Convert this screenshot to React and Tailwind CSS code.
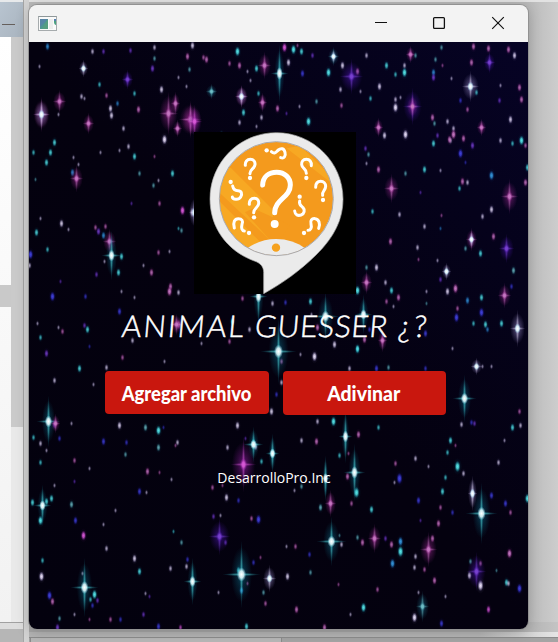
import React from "react";

const COLORS = {
  w: ["#e9e0fa", "#8d80bd"],
  c: ["#56e6e8", "#0b86a4"],
  t: ["#70c0c8", "#155f78"],
  p: ["#c878c4", "#8c2383"],
  m: ["#d95ad8", "#861a98"],
  v: ["#7a42d2", "#4413a0"],
  b: ["#4040dc", "#1c18a0"],
  s: ["#3496dc", "#0b4f9c"],
};

// Small elongated stars: x, y, colour, size
const DOTS = [
  [47,46,"s",3],[92,51,"w",2],[103,51,"v",2],[130,50,"v",2],[154,47,"w",2],[154,58,"t",2],[192,45,"w",3],[187,56,"p",3],[189,69,"t",2],
  [39,66,"w",1],[99,84,"c",2],[106,95,"p",2],[84,98,"w",1],[81,96,"w",2],[117,103,"s",2],[134,93,"c",2],[110,108,"w",3],[111,115,"w",3],[138,109,"p",3],[161,89,"w",3],[152,68,"v",3],[178,77,"w",1],[186,86,"w",1],[123,128,"w",2],[128,146,"w",2],[100,152,"w",1],[119,150,"w",1],[134,156,"c",3],[164,139,"w",4],[154,156,"p",1],
  [54,142,"c",3],[50,152,"c",3],[33,152,"c",2],[46,162,"c",3],[35,179,"t",1],[58,114,"w",1],[73,157,"w",1],[78,164,"w",1],[72,172,"s",3],[139,173,"t",2],[172,173,"c",3],[158,180,"w",1],[153,185,"t",2],[159,203,"p",2],[182,210,"m",4],[192,212,"w",4],[178,228,"c",1],[181,230,"t",2],[131,203,"v",1],
  [203,57,"p",2],[206,59,"p",3],[229,63,"p",2],[239,65,"p",3],[237,51,"c",4],[256,68,"c",3],[247,71,"w",1],[250,80,"w",1],[284,47,"m",4],[293,49,"c",4],[301,51,"c",3],[297,45,"p",1],[288,62,"w",3],[312,55,"v",2],[328,72,"c",4],[342,65,"w",3],[302,73,"b",3],[357,71,"p",3],[340,89,"w",2],[316,101,"t",2],[341,105,"p",2],[299,106,"w",1],[308,121,"c",4],[258,93,"c",2],[243,112,"c",3],[277,108,"p",3],[286,113,"v",1],[239,122,"w",2],[261,117,"w",2],[221,134,"c",2],[256,126,"w",1],
  [366,55,"w",2],[386,65,"c",3],[415,55,"t",2],[404,65,"w",2],[395,74,"c",2],[404,72,"c",4],[379,86,"w",3],[370,98,"c",2],[360,91,"w",1],[395,99,"w",2],[400,97,"w",1],[395,107,"w",4],[433,72,"s",3],[433,77,"v",3],[435,59,"t",2],[441,47,"t",2],[442,65,"p",1],[473,46,"p",3],[488,48,"p",3],[471,62,"p",3],[508,49,"p",3],[514,55,"w",3],[476,92,"c",2],[460,100,"b",2],[467,109,"p",2],[519,87,"p",3],[521,99,"p",3],[499,100,"v",2],[510,119,"w",3],[432,117,"p",3],[434,123,"t",2],[447,121,"w",2],[453,128,"w",2],[500,85,"w",1],[451,78,"w",1],
  [384,135,"w",3],[405,134,"w",4],[437,135,"v",2],[433,143,"c",3],[450,140,"w",2],[460,153,"b",4],[465,162,"b",1],[453,134,"p",4],[449,139,"p",3],[463,138,"p",3],[472,145,"v",3],[500,140,"w",2],[512,143,"c",2],[521,140,"c",4],[525,145,"p",2],[365,148,"v",2],[368,154,"t",2],[366,163,"w",1],[378,169,"p",3],[405,173,"t",2],[424,169,"c",3],[440,170,"w",1],[491,175,"s",4],[527,167,"c",3],[525,182,"p",3],[462,181,"p",3],[459,188,"c",2],[467,182,"w",2],[372,211,"c",2],[399,214,"w",2],[420,192,"v",1],[491,209,"w",3],[482,216,"w",2],[424,226,"w",2],[441,215,"p",1],[440,228,"s",1],[390,241,"p",3],[417,247,"w",2],[418,259,"p",1],[493,236,"p",3],[465,248,"t",2],[480,253,"c",3],[376,267,"w",3],[366,267,"t",2],[446,271,"w",2],[437,260,"w",1],[440,279,"v",2],[513,270,"t",3],[455,288,"p",4],[447,291,"w",3],[511,286,"b",2],[357,290,"c",4],[391,290,"c",3],[398,297,"p",3],[385,282,"w",2],[386,301,"p",2],[393,306,"w",1],[426,291,"w",1],[426,303,"t",1],[467,300,"s",3],[481,297,"c",3],[457,308,"p",2],[456,317,"b",4],[481,312,"b",4],[473,323,"c",2],[485,324,"c",3],[501,323,"c",3],[487,329,"s",2],[452,348,"w",1],[357,349,"c",3],[425,333,"b",3],[388,367,"t",2],[376,368,"b",3],[482,366,"w",1],[491,366,"w",1],[425,368,"b",2],
  [95,227,"p",2],[98,231,"v",3],[105,226,"p",2],[103,235,"s",3],[40,218,"w",1],[61,223,"w",3],[36,232,"c",3],[68,229,"w",1],[47,249,"c",2],[30,254,"b",4],[29,265,"w",2],[121,256,"c",3],[118,272,"c",3],[104,261,"w",1],[96,274,"v",2],[143,265,"w",1],[151,272,"p",3],[158,252,"p",2],[169,251,"w",1],[121,291,"w",1],[170,286,"p",3],[169,291,"p",4],[178,292,"w",2],[134,297,"w",1],[52,296,"b",4],[85,296,"b",2],[60,281,"v",1],[119,311,"b",3],[37,323,"w",1],[58,327,"w",1],[62,331,"p",2],[40,337,"c",2],[84,325,"v",2],[87,329,"c",3],[132,340,"w",2],[46,353,"v",3],[122,357,"p",2],[89,346,"b",1],[79,368,"c",3],[106,367,"w",2],[164,361,"w",1],[54,380,"w",2],[93,384,"w",1],
  [242,298,"p",2],[272,303,"w",2],[285,302,"b",2],[310,301,"c",3],[311,314,"w",1],[232,321,"c",3],[178,324,"p",4],[249,329,"w",2],[229,341,"p",2],[201,343,"w",1],[300,354,"w",1],[334,344,"w",3],[314,356,"w",4],[357,348,"c",3],[281,361,"p",2],[281,382,"w",2],[271,411,"w",3],[317,327,"p",3],[364,339,"p",3],[369,329,"b",2],[276,394,"b",2],[349,368,"w",2],[363,314,"w",3],
  [54,424,"v",3],[59,438,"b",2],[71,423,"w",1],[33,437,"c",2],[40,443,"w",2],[46,450,"w",1],[40,462,"c",2],[74,460,"p",2],[89,468,"w",1],[103,441,"b",3],[126,442,"b",2],[119,425,"w",3],[145,427,"t",3],[158,430,"c",4],[158,447,"t",3],[163,427,"b",1],[125,454,"t",2],[177,442,"w",2],[175,445,"p",1],[147,471,"p",3],[159,472,"p",1],[139,491,"b",3],[146,492,"w",1],[171,479,"w",1],[74,481,"v",1],[54,485,"w",1],[71,504,"t",3],[32,502,"c",3],[46,501,"c",3],[51,498,"c",3],[40,520,"c",4],[75,520,"b",3],[115,510,"w",1],[103,524,"w",1],[83,535,"m",4],[106,548,"w",2],[134,558,"w",3],[139,571,"c",3],[170,568,"w",2],[186,566,"w",2],[187,559,"b",2],[42,560,"c",2],[41,576,"w",4],[49,595,"b",4],[52,601,"p",3],[59,618,"t",2],[57,627,"v",3],[94,594,"c",4],[90,599,"c",2],[97,600,"v",2],[92,605,"b",2],[82,573,"w",1],[74,614,"w",1],[89,619,"p",1],[110,619,"p",2],[120,619,"b",2],[145,593,"w",1],[143,614,"v",2],[149,596,"v",1],[158,626,"b",3],[180,627,"m",2],[173,531,"c",1],[181,542,"t",2],
  [237,425,"w",3],[227,447,"w",2],[253,443,"c",4],[255,446,"w",3],[272,453,"c",4],[261,461,"c",2],[245,438,"v",1],[226,497,"w",3],[238,500,"b",2],[212,487,"p",2],[222,485,"p",1],[213,516,"v",2],[220,515,"w",1],[251,518,"p",2],[258,519,"b",4],[225,542,"v",2],[253,562,"b",2],[260,557,"p",1],[218,592,"w",1],[241,590,"s",3],[247,583,"p",1],[263,592,"t",2],[265,603,"p",2],[246,626,"c",3],[238,570,"c",3],
  [317,421,"w",2],[333,421,"c",4],[378,427,"c",2],[301,440,"w",2],[316,441,"p",3],[358,434,"p",3],[339,455,"c",2],[348,453,"p",1],[395,463,"p",2],[415,458,"w",2],[428,466,"w",1],[399,478,"b",5],[394,482,"w",1],[347,476,"p",3],[356,492,"c",5],[351,503,"p",2],[371,509,"c",3],[320,507,"t",3],[301,486,"t",2],[294,490,"w",1],[418,500,"b",3],[445,477,"c",2],[463,473,"w",2],[457,466,"c",5],[447,452,"c",2],[450,440,"c",3],[455,445,"p",1],[461,424,"w",2],[471,422,"b",2],[474,423,"v",2],[498,462,"w",2],[504,440,"w",1],[512,427,"c",3],[520,425,"w",2],[519,411,"p",2],[442,491,"c",3],[472,493,"w",3],[491,495,"b",3],[505,503,"b",3],[527,498,"c",4],[510,512,"p",2],[440,507,"p",2],[452,512,"b",2],[438,523,"p",3],[420,520,"v",1],[339,535,"t",1],[341,544,"w",2],[357,537,"t",2],[362,542,"p",3],[385,538,"v",2],[391,544,"p",3],[400,541,"s",4],[400,551,"c",5],[392,563,"s",4],[415,556,"w",2],[414,567,"w",2],[424,569,"p",2],[432,538,"p",3],[434,580,"p",3],[309,554,"b",2],[295,546,"p",2],[286,546,"w",1],[287,576,"w",3],[310,572,"t",2],[338,584,"p",1],[377,589,"p",2],[363,607,"c",4],[350,614,"w",1],[296,609,"p",3],[324,627,"p",3],[414,617,"w",4],[418,592,"w",1],[480,585,"w",5],[469,575,"w",3],[480,563,"p",2],[470,561,"t",2],[506,582,"c",3],[508,583,"w",2],[519,588,"b",4],[488,609,"m",3],[509,553,"p",4],[445,596,"w",1],[496,570,"t",1],[441,623,"b",3],
];

// Cross-shaped sparkles: x, y, colour, half width, half height
const FLARES = [
  [83,68,"w",5,9],[41,114,"p",9,18],[41,114,"w",8,16],[59,101,"p",7,12],[88,123,"p",6,11],[127,79,"v",6,10],[168,113,"p",10,22],[175,103,"p",5,12],[190,119,"p",12,19],[190,119,"p",9,17],[194,121,"m",8,17],[177,128,"p",5,9],
  [211,91,"t",6,8],[241,96,"p",7,12],[241,96,"w",6,11],[264,65,"p",7,14],[262,102,"p",5,10],[279,73,"c",9,29],[333,56,"t",6,10],[333,56,"w",4,7],[351,76,"v",12,18],[410,54,"p",5,9],[412,106,"v",10,19],[412,106,"p",6,12],[470,86,"w",9,16],[489,62,"v",6,11],[378,127,"p",5,10],[481,127,"p",5,9],
  [391,188,"p",8,15],[509,196,"p",9,18],[471,239,"p",6,12],[471,239,"w",4,9],[506,248,"v",8,15],[446,271,"w",5,9],[504,295,"p",7,13],[517,328,"w",8,19],[366,282,"p",6,12],[76,178,"p",7,14],[109,241,"p",7,13],[111,255,"c",10,25],[194,212,"w",6,17],[176,324,"p",7,11],
  [258,296,"c",9,29],[278,351,"c",18,33],[325,316,"c",14,25],[363,314,"c",9,20],[382,340,"p",5,12],[476,366,"w",6,9],[48,421,"c",12,26],[55,423,"p",5,10],[243,464,"m",13,28],[219,536,"v",11,19],[192,581,"c",9,24],[241,574,"c",19,34],[269,578,"w",7,14],[84,587,"c",14,30],[42,505,"c",9,21],[354,472,"c",11,29],[345,436,"c",7,27],[325,478,"c",5,23],[330,503,"p",6,14],[331,541,"c",15,25],[374,538,"p",7,15],[428,549,"p",9,18],[481,513,"c",16,31],[476,571,"v",10,20],[422,606,"t",7,16],[472,493,"w",5,18],[464,398,"c",12,24],[253,444,"c",10,18],[272,453,"c",7,20],
];

function StarField() {
  return (
    <svg className="col-start-1 row-start-1 block h-[587px] w-[499px]" viewBox="29 42 499 587" aria-hidden="true">
      <defs>
        <linearGradient id="night" x1="0" y1="1" x2="1" y2="0">
          <stop offset="0" stopColor="#03010e" />
          <stop offset=".5" stopColor="#04010f" />
          <stop offset=".8" stopColor="#05021b" />
          <stop offset="1" stopColor="#060325" />
        </linearGradient>
        {Object.entries(COLORS).map(([k, [core, glow]]) => (
          <React.Fragment key={k}>
            <radialGradient id={"dot-" + k}>
              <stop offset="0" stopColor={core} />
              <stop offset=".4" stopColor={core} stopOpacity=".8" />
              <stop offset="1" stopColor={glow} stopOpacity="0" />
            </radialGradient>
            <radialGradient id={"glow-" + k}>
              <stop offset="0" stopColor={glow} stopOpacity=".95" />
              <stop offset=".5" stopColor={glow} stopOpacity=".4" />
              <stop offset="1" stopColor={glow} stopOpacity="0" />
            </radialGradient>
          </React.Fragment>
        ))}
        <radialGradient id="spark">
          <stop offset="0" stopColor="#ffffff" />
          <stop offset=".5" stopColor="#e4fbff" stopOpacity=".85" />
          <stop offset="1" stopColor="#8fdcf0" stopOpacity="0" />
        </radialGradient>
      </defs>
      <rect x="29" y="42" width="499" height="587" fill="url(#night)" />
      {DOTS.map(([x, y, c, s], i) => (
        <g key={i}>
          <ellipse cx={x + 0.5} cy={y + 0.5} rx={1.6 + s * 0.6} ry={2.4 + s * 1.2} fill={`url(#glow-${c})`} opacity=".3" />
          <ellipse cx={x + 0.5} cy={y + 0.5} rx={1.2 + s * 0.36} ry={1.8 + s * 0.8} fill={`url(#dot-${c})`} opacity={Math.min(1, 0.25 + s * 0.18)} />
        </g>
      ))}
      {FLARES.map(([x, y, c, w, h], i) => (
        <g key={i} transform={`translate(${x + 0.5} ${y + 0.5})`}>
          <ellipse rx={c === "c" ? w * 0.55 : w * 0.9} ry={h * 0.8} fill={`url(#glow-${c})`} opacity={c === "c" ? 0.55 : 0.8} />
          <ellipse rx={w} ry="1.7" fill={`url(#dot-${c})`} opacity=".55" />
          <ellipse rx="1.7" ry={h} fill={`url(#dot-${c})`} opacity=".55" />
          <ellipse rx={2 + w * 0.14} ry={2.4 + h * 0.14} fill={c === "c" || c === "w" ? "url(#spark)" : `url(#dot-${c})`} />
        </g>
      ))}
    </svg>
  );
}

function Logo() {
  return (
    <svg className="block size-[162px] bg-black" viewBox="12 21 486 486" aria-hidden="true">
      <defs>
        <clipPath id="disc"><circle cx="259" cy="221" r="170" /></clipPath>
      </defs>
      <path d="M259 23C369 23 459 112 459 222C459 282 434 335 378 390C330 437 279 474 221 506V442C221 425 211 414 193 408C111 378 60 307 60 222C60 112 149 23 259 23Z" fill="#ebebeb" stroke="#aaa" strokeWidth="2" />
      <g clipPath="url(#disc)">
        <rect x="85" y="45" width="350" height="350" fill="#f49a1d" />
        <path d="M85 130L122 128L250 256L245 350L85 200Z" fill="#f7a823" />
        <path d="M80 220L215 355L180 380L80 290Z" fill="#f7a823" />
        <path d="M190 250L300 300L270 345L240 345L165 262Z" fill="#f49a1d" />
        <path d="M290 70L330 62L425 155V175Z" fill="#f7a823" />
        <path d="M170 372C218 332 298 332 348 372L330 405H190Z" fill="#ebebeb" />
      </g>
      <circle cx="259" cy="221" r="171" fill="none" stroke="#a9a9ad" strokeWidth="3" />
      <circle cx="258" cy="368" r="12.5" fill="#f6a21e" />
      <g fill="none" stroke="#fff" strokeLinecap="round" strokeLinejoin="round">
        <path strokeWidth="15" d="M218 180C219 156 236 142 260 142C284 142 301 158 301 180C301 217 254 223 254 263" />
        <g strokeWidth="9">
          <path d="M166 121C165 110 171 103 181 103C191 103 196 110 195 119C194 132 179 132 180 146" />
          <path d="M178 238C177 227 183 220 193 220C203 220 207 227 206 236C205 248 191 249 191 263" />
          <path d="M364 122C365 110 359 103 349 103C339 103 334 110 335 119C336 132 350 131 349 145" />
          <path d="M377 187C377 175 383 169 392 169C401 169 407 175 407 184C407 197 395 198 398 211" />
          <path d="M272 98C282 102 288 93 285 82C282 70 273 68 265 75C257 82 254 89 244 80" />
          <path d="M127 216C128 224 146 226 152 216C158 206 154 197 144 197C135 197 130 194 128 183" />
          <path d="M314 258C315 270 324 273 333 270C344 266 345 254 339 248C333 241 326 240 329 228" />
          <path d="M133 309C128 292 134 281 145 281C156 281 160 288 156 298C153 309 156 317 163 318" />
          <path d="M386 310C392 296 386 282 376 281C365 279 360 287 363 297C366 308 362 316 354 316" />
        </g>
      </g>
      <g fill="#fff">
        <circle cx="254" cy="297" r="12" />
        <circle cx="180" cy="159" r="6.5" /><circle cx="192" cy="277" r="6.5" />
        <circle cx="349" cy="159" r="6.5" /><circle cx="399" cy="225" r="6.5" />
        <circle cx="230" cy="76" r="6.5" /><circle cx="122" cy="171" r="6.5" />
        <circle cx="329" cy="215" r="6.5" /><circle cx="177" cy="324" r="6.5" />
        <circle cx="342" cy="324" r="6.5" />
      </g>
    </svg>
  );
}

function AppIcon() {
  return (
    <svg className="ml-[9px] block h-4 w-5" viewBox="0 0 20 16" aria-hidden="true">
      <rect x=".5" y=".5" width="18" height="14" fill="#fafafa" stroke="#a6abad" />
      <path d="M.5.5H18.5" stroke="#8e9799" />
      <rect x="2" y="3" width="8" height="10" fill="#4f9590" />
      <path d="M2 3H10L2 11Z" fill="#5784a5" />
      <path d="M10 3V13H4Z" fill="#5ba474" opacity=".6" />
      <rect x="11" y="3" width="4" height="10" fill="#ededed" />
      <path d="M16 3H18V9C17 9 16 8 16 6Z" fill="#4aa080" />
      <path d="M16 3H18V5H16Z" fill="#527fb0" />
    </svg>
  );
}

function TitleBar() {
  return (
    <header className="flex h-[37px] items-center bg-[#f3f3f3]">
      <AppIcon />
      <svg className="mt-[-2px] mr-[21px] ml-auto block h-4 w-[134px]" viewBox="0 0 134 16" fill="none" stroke="#111" aria-hidden="true">
        <path d="M2 7.5H14" />
        <rect x="60.6" y="2.6" width="10.8" height="10.8" rx="1" strokeWidth="1.3" />
        <path d="M119.2 2.2L130.8 13.8M130.8 2.2L119.2 13.8" strokeWidth="1.15" />
      </svg>
    </header>
  );
}

function Desktop() {
  return (
    <div className="flex h-full w-full bg-[#c9c9c9]">
      <div className="flex w-6 flex-col border-r border-[#a5a5a5] bg-[#f6f6f6]">
        <div className="h-0.5 bg-[#e7e9eb]" />
        <div className="flex h-[35px] items-center bg-gradient-to-br from-[#b8c4d0] to-[#a9b4bf]">
          <div className="mt-2.5 ml-0.5 h-px w-[13px] bg-[#655f5c]" />
        </div>
        <div className="flex h-[585px] bg-gradient-to-b from-white to-[#f2f2f2]">
          <div className="w-[11px] pt-[248px]"><div className="h-[22px] bg-[#c9c9c9]" /></div>
          <div className="flex-1 bg-[#e9e9e9]"><div className="h-[390px] bg-[#cacaca]" /></div>
        </div>
        <div className="h-px bg-[#a1a1a1]" />
        <div className="h-1.5 bg-[#dddddd]" />
        <div className="flex-1 bg-[#b6b6b6]" />
      </div>
      <div className="w-[5px] bg-[#d3d3d3]" />
      <div className="flex flex-1 flex-col">
        <div className="h-0.5 bg-[#e2e2e2]" />
        <div className="flex-1 bg-gradient-to-r from-[#b9b9b9] from-[94%] to-[#cdcdcd]" />
        <div className="h-[10px] bg-gradient-to-r from-[#a6a6a6] from-[90%] to-[#c4c4c4]" />
        <div className="flex h-[5px] bg-gradient-to-r from-[#b4b4b4] from-[85%] to-[#e6e6e6]" />
        <div className="flex h-[5px] border-t border-[#8c8c8c] bg-[#a4a4a4]">
          <div className="ml-px w-[252px] border-x border-[#8c8c8c] bg-[#b7b7b7]" />
        </div>
      </div>
    </div>
  );
}

export default function App() {
  return (
    <div className="relative h-[642px] w-[558px] overflow-hidden">
      <Desktop />
      <main className="absolute top-[5px] left-[29px] w-[499px] overflow-hidden rounded-lg shadow-[0_0_0_1px_#929292,0_2px_14px_rgba(0,0,0,0.22)]">
        <TitleBar />
        <section className="grid h-[587px]">
          <StarField />
          <div className="z-10 col-start-1 row-start-1 flex flex-col items-center pt-[90px] text-white">
            <div className="mr-[7px]"><Logo /></div>
            <h1 className="mt-2.5 mr-[6px] flex h-[42px] w-[308px] -skew-x-[5deg] items-center font-['Lato','Liberation_Sans',sans-serif] text-[30px] leading-none font-light whitespace-nowrap [-webkit-text-stroke:0.5px_white]">
              <span className="w-[134px] tracking-[1.9px]">ANIMAL</span>
              <span className="w-[144px] tracking-[0.6px]">GUESSER</span>
              <span className="tracking-[3px]">¿?</span>
            </h1>
            <div className="mt-[25px] mr-[7px] flex gap-[14px]">
              <button className="flex h-[43px] w-[164px] items-center justify-center rounded bg-[#c9170e] font-['Lato','Liberation_Sans',sans-serif] text-[20px] font-black whitespace-nowrap">
                <span className="scale-x-[0.92]">Agregar archivo</span>
              </button>
              <button className="flex h-[44px] w-[163px] items-center justify-center rounded bg-[#c9170e] font-['Lato','Liberation_Sans',sans-serif] text-[20px] font-black whitespace-nowrap">
                <span className="scale-x-[0.97]">Adivinar</span>
              </button>
            </div>
            <p className="mt-[52px] mr-[9px] font-['Open_Sans','Noto_Sans',sans-serif] text-[14px] leading-[21px] whitespace-nowrap">DesarrolloPro.Inc</p>
          </div>
        </section>
      </main>
    </div>
  );
}
